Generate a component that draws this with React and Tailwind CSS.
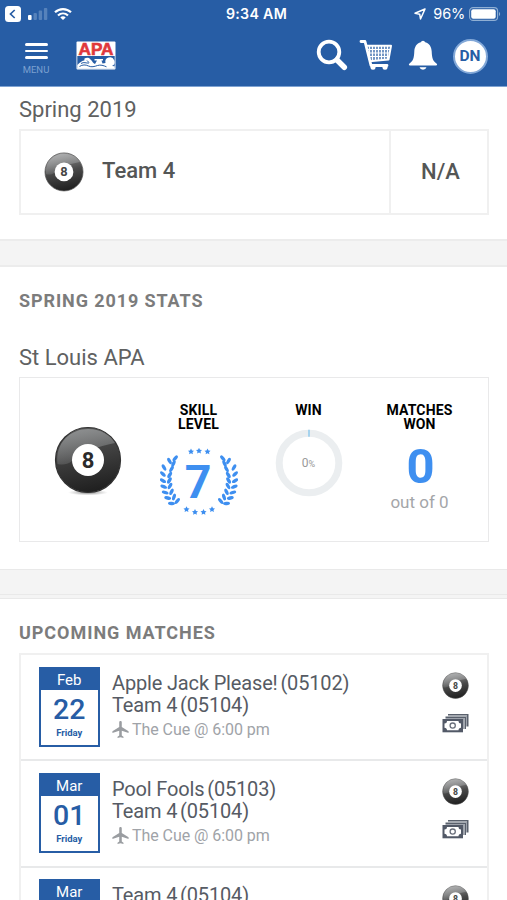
import React from "react";

function EightBall({ className, id, small = false }) {
  return (
    <svg viewBox="0 0 68 70" className={className}>
      <defs>
        <linearGradient id={`${id}-body`} x1="0.3" y1="0" x2="0.5" y2="1">
          <stop offset="0" stopColor={small ? "#9a9a9a" : "#5a5a5a"} />
          <stop offset="0.5" stopColor={small ? "#4a4a4a" : "#3c3c3c"} />
          <stop offset="1" stopColor="#1f1f1f" />
        </linearGradient>
        <linearGradient id={`${id}-gloss`} x1="0.2" y1="0" x2="0.5" y2="1">
          <stop offset="0" stopColor={small ? "#b0b1b2" : "#8f9192"} />
          <stop offset="1" stopColor="#8c8e8f" stopOpacity="0.2" />
        </linearGradient>
        <radialGradient id={`${id}-shadow`}>
          <stop offset="0" stopColor="#555" stopOpacity="0.8" />
          <stop offset="1" stopColor="#999" stopOpacity="0" />
        </radialGradient>
      </defs>
      {!small && <ellipse cx="34" cy="66.5" rx="20" ry="3" fill={`url(#${id}-shadow)`} />}
      <circle cx="34" cy="34" r="32.5" fill={`url(#${id}-body)`} stroke={small ? "#555" : "#333"} strokeWidth="1.2" />
      <path d="M3.5 38C1 16 17 3 34 3c14 0 23 7 27 14C46 20 28 25 18 35c-5 4-10 4-14.500 3Z" fill={`url(#${id}-gloss)`} />
      <circle cx="34" cy="34" r="16" fill="#fff" />
      <text x="34" y="41.500" textAnchor="middle" fontFamily="Roboto, Liberation Sans, sans-serif" fontWeight="700" fontSize="22" fill={small ? "#444" : "#2b2b2b"}>8</text>
    </svg>
  );
}

function Logo() {
  return (
    <svg viewBox="0 0 40 29" className="ml-[26px] h-[29px] w-10">
      <rect x="0.500" y="0.500" width="39" height="28" rx="1" fill="#fff" />
      <text x="20" y="13.600" textAnchor="middle" textLength="35" lengthAdjust="spacingAndGlyphs" fontFamily="Liberation Sans, sans-serif" fontWeight="700" fontSize="16.500" fill="#e0383c" stroke="#e0383c" strokeWidth="0.600">APA</text>
      <rect x="1.300" y="15" width="37.400" height="12.400" fill="#275da5" />
      <path d="M1.300 24c3-3 5-4.500 7-4.500L8.500 17.500c2-1.500 5-1 6 1 2 1.500 2.500 4 4.500 4.500l2-3.500h-2.500v-1.500h8.500v1.500h-1.500l1 3 3-.5a4.600 4.600 0 1 1 6.500 3l2.700.3v2.500H1.300Z" fill="#fff" />
      <path d="M3.500 25.500c3-2 6-2 9-.5s6 .5 9-.5 6 0 9 1.300M5 22.500c3-2 5 0 8-.5M11 19.500l2 2" fill="none" stroke="#275da5" strokeWidth="1" />
    </svg>
  );
}

function StatusBar() {
  return (
    <div className="flex h-7 items-center justify-between pl-[5px] pr-[6px] text-white">
      <div className="flex w-[126px] items-center">
        <svg viewBox="0 0 16 16" className="h-4 w-4">
          <rect width="16" height="16" rx="3.500" fill="#fff" />
          <path d="M9.700 4 5.500 8l4.200 4" fill="none" stroke="#275da5" strokeWidth="1.700" />
        </svg>
        <svg viewBox="0 0 20 14" className="ml-[7px] h-[14px] w-5 shrink-0">
          <rect x="0" y="8" width="3.600" height="5" rx="1" fill="#fff" />
          <rect x="5.500" y="6" width="3.400" height="7" rx="1" fill="#6b93c4" fillOpacity="0.7" />
          <rect x="10.700" y="3.500" width="3.400" height="9.500" rx="1" fill="#6b93c4" fillOpacity="0.7" />
          <rect x="15.900" y="1" width="3.400" height="12" rx="1" fill="#6b93c4" fillOpacity="0.7" />
        </svg>
        <svg viewBox="0 0 18 14" className="ml-[6px] h-[14px] w-[18px]" fill="none" stroke="#fff" strokeWidth="2.200">
          <path d="M1 5.300c4.500-4.300 11.500-4.300 16 0M4 8.500c2.900-2.700 7.100-2.700 10 0" />
          <path d="M9 13 6.300 10.400c1.500-1.400 3.900-1.400 5.400 0Z" fill="#fff" stroke="none" />
        </svg>
      </div>
      <div className="font-[Inter,Roboto,sans-serif] text-[14.200px] font-semibold tracking-[0.300px]">9:34 AM</div>
      <div className="flex w-[119px] items-center justify-end">
        <svg viewBox="0 0 12 12" className="h-3 w-3">
          <path d="M11 1 1 5.300l4.700.9L6.500 11Z" fill="none" stroke="#fff" strokeWidth="1.500" strokeLinejoin="round" />
        </svg>
        <span className="ml-[7px] font-[Inter,Roboto,sans-serif] text-[14.500px] tracking-[-0.200px]">96%</span>
        <svg viewBox="0 0 32 14" className="ml-1 h-[14px] w-8 shrink-0">
          <rect x="0.600" y="0.600" width="28" height="12.800" rx="3.500" fill="none" stroke="#8fafd4" strokeWidth="1.100" />
          <rect x="2.200" y="2.200" width="24.500" height="9.600" rx="2" fill="#fff" />
          <path d="M30 5c1.500.5 1.500 3.500 0 4Z" fill="#8fafd4" />
        </svg>
      </div>
    </div>
  );
}

function CartIcon() {
  return (
    <svg viewBox="0 0 34 32" className="ml-[11px] h-8 w-[34px]" fill="none" stroke="#fff">
      <path d="M2 2.500h4l6 24h16" strokeWidth="2.800" strokeLinecap="round" strokeLinejoin="round" />
      <path d="M6.500 6.700h25.500l-2.500 13.800-19 1.700" strokeWidth="2" strokeLinejoin="round" />
      <path d="M10.500 7v14M13.500 7v14M16.500 7v14M19.500 7v14M22.500 7v14M25.500 7v14M28.500 7v13" strokeWidth="1.700" />
      <path d="M8 10.500h23M9 14h21.500M10 17.500h20" strokeWidth="1.200" />
      <circle cx="14" cy="28.300" r="2.500" fill="#fff" stroke="none" />
      <circle cx="26" cy="28.300" r="2.500" fill="#fff" stroke="none" />
    </svg>
  );
}

function Header() {
  return (
    <header className="h-[86.500px] shrink-0 border-b border-[#7fa3d2] bg-[#275da5]">
      <StatusBar />
      <div className="flex h-[54px] items-center pl-[22px] pr-[19.500px]">
        <div className="flex w-7 flex-col items-center">
          <div className="mt-[8px] flex w-[23px] flex-col gap-1">
            <span className="h-[2.500px] rounded-sm bg-white" />
            <span className="h-[2.500px] rounded-sm bg-white" />
            <span className="h-[2.500px] rounded-sm bg-white" />
          </div>
          <span className="mt-[6px] text-[9.500px] leading-[10px] text-[#7ba0d0]">MENU</span>
        </div>
        <Logo />
        <div className="ml-auto flex items-center">
          <svg viewBox="0 0 32 32" className="h-8 w-8" fill="none" stroke="#fff">
            <circle cx="13" cy="13" r="10.300" strokeWidth="3.800" />
            <path d="m21 21 7.300 7.300" strokeWidth="5.500" strokeLinecap="round" />
          </svg>
          <CartIcon />
          <svg viewBox="0 0 30 32" className="ml-[15px] h-8 w-[30px]" fill="#fff">
            <path d="M12.800 3.300a2.300 2.300 0 0 1 4.400 0C21.500 4.500 23.500 8 23.700 12.500c.3 7 1.300 9.500 4.800 12 1 .8.800 2-.5 2H2c-1.300 0-1.500-1.200-.5-2 3.500-2.500 4.500-5 4.800-12C6.500 8 8.500 4.500 12.800 3.300ZM11.500 28.200h7a3.600 3.200 0 0 1-7 0Z" />
          </svg>
          <div className="ml-[15px] mt-[2px] flex h-[35px] w-[35px] items-center justify-center rounded-full border-2 border-[#82a8d8] bg-white pt-[2px] text-[15.500px] font-bold leading-none text-[#275da5]">DN</div>
        </div>
      </div>
    </header>
  );
}

const LEAVES = [
  [9.500, 13, 60], [15.200, 10.300, -48], [4, 19.500, 60], [13.500, 15.500, -65],
  [2.900, 26, 45], [11.500, 21, -60], [2.900, 32.700, 30], [9.700, 27, -58],
  [3.700, 38.700, 22], [9.400, 32.500, -58], [5.200, 44.500, 18], [10, 38, -60],
  [7.700, 50, 14], [11.500, 43.800, -65], [11.500, 55.500, 5], [14, 49, -72], [17.300, 53, -50],
];

function Branch() {
  return LEAVES.map(([x, y, r], i) => (
    <ellipse key={i} cx={x} cy={y} rx="3.500" ry="1.700" transform={`rotate(${r} ${x} ${y})`} />
  ));
}

const STARS = [[31, 3.500], [39, 2.800], [47.500, 3.500], [26.500, 61.300], [35, 64], [43.500, 64], [52, 61.300]];

function SkillBadge() {
  return (
    <svg viewBox="0 0 78 68" className="h-[68px] w-[78px]" fill="#3e8ff0">
      <Branch />
      <g transform="translate(78 0) scale(-1 1)"><Branch /></g>
      {STARS.map(([x, y], i) => (
        <path key={i} transform={`translate(${x} ${y})`} d="M0-3 1-1 3-.8 1.500.7 1.900 2.800 0 1.800-1.900 2.800-1.500.7-3-.8-1-1Z" />
      ))}
      <text x="38" y="49.500" textAnchor="middle" fontFamily="Roboto, sans-serif" fontWeight="700" fontSize="46.500">7</text>
    </svg>
  );
}

function MoneyIcon() {
  return (
    <svg viewBox="0 0 27 20" className="mt-[12.500px] h-5 w-[27px]">
      <path d="M6 1h20.500v12.500H25V2.500H6ZM3.500 3.500h20.500v12.500h-1.500V5H3.500Z" fill="#59606c" />
      <path d="M6 2.500h19v11h-1V3.500H6ZM3.500 5h19v11h-1.500V6h-17.500Z" fill="#9ea3ac" />
      <rect x="0.500" y="6" width="20.500" height="13.300" fill="#525967" />
      <path d="M5 8h11.500c0 1.700 1 2.500 2.500 2.500v4.300c-1.500 0-2.500.9-2.500 2.500H5c0-1.600-1-2.500-2.500-2.500v-4.300C4 10.500 5 9.700 5 8Z" fill="#fff" />
      <circle cx="10.700" cy="12.600" r="2.600" fill="none" stroke="#6a707c" strokeWidth="1.300" />
    </svg>
  );
}

function Match({ month, day, teams, id }) {
  return (
    <li className="flex h-[106.300px] shrink-0 border-b-2 border-[#e8e9ea] pl-[17.500px] pr-[18px] pt-[11.500px]">
      <div className="flex h-[80px] w-[61.500px] flex-col border-2 border-[#275da5] bg-white text-center text-[#275da5]">
        <div className="h-[21.500px] bg-[#275da5] text-[15px] leading-[22px] text-white">{month}</div>
        {day && (
          <>
            <div className="pt-[5px] text-[28.500px] font-medium leading-[30px]">{day}</div>
            <div className="pt-[1px] text-[9.500px] font-bold leading-[13px]">Friday</div>
          </>
        )}
      </div>
      <div className="ml-[12px] flex-1 whitespace-nowrap pt-[5px] text-[20px] leading-[22px] tracking-[-0.160px] text-[#565b64]">
        {teams.map(([name, number]) => (
          <div key={name}>
            {name} <span className="ml-[-2px]">({number})</span>
          </div>
        ))}
        <div className="flex h-[28px] items-center text-[16px] tracking-[-0.060px] text-[#a0a3a8]">
          <svg viewBox="2 2 19 20" className="mr-[3px] h-[17px] w-[17px] shrink-0" fill="#9a9da1">
            <path d="M21 16v-2l-8-5V3.500c0-.83-.67-1.500-1.500-1.500S10 2.670 10 3.500V9l-8 5v2l8-2.500V19l-2 1.500V22l3.500-1 3.500 1v-1.500L13 19v-5.500l8 2.500z" />
          </svg>
          The Cue @ 6:00 pm
        </div>
      </div>
      <div className="pt-[5.500px]">
        <EightBall id={id} small className="h-[28px] w-[27px]" />
        <MoneyIcon />
      </div>
    </li>
  );
}

function StatTitle({ children }) {
  return <h3 className="h-[29px] whitespace-nowrap text-[14px] font-bold leading-[14.500px] tracking-[0.150px] text-black">{children}</h3>;
}

export default function App() {
  return (
    <div className="flex h-[900px] w-[507px] flex-col overflow-hidden bg-white font-[Roboto,sans-serif]">
      <Header />
      <section className="h-[152px] shrink-0 pl-[19px] pr-[18px] pt-[11px]">
        <h2 className="text-[22px] leading-6 text-[#606161]">Spring 2019</h2>
        <div className="mt-[7px] flex h-[86px] border-2 border-[#f0f0f0] text-[22px] font-medium text-[#545656]">
          <div className="flex flex-1 items-center pl-[23px]">
            <EightBall id="team" small className="mt-[2px] h-[41px] w-[40px]" />
            <span className="mb-[3px] ml-[18px]">Team 4</span>
          </div>
          <div className="flex w-[98px] items-center justify-center border-l-2 border-[#f0f0f0] pl-[3px]">N/A</div>
        </div>
      </section>
      <div className="h-[28px] shrink-0 border-y-2 border-[#ececec] bg-[#f4f4f4]" />
      <section className="h-[302.500px] shrink-0 pl-[19px] pr-[18px] pt-[22px]">
        <h2 className="text-[18px] font-bold leading-6 tracking-[0.900px] text-[#7c7c7c]">SPRING 2019 STATS</h2>
        <h3 className="mt-[33px] text-[22px] leading-6 text-[#606161]">St Louis APA</h3>
        <div className="mt-[7px] flex h-[165.500px] border border-[#e9e9ea] pt-[25px] text-center">
          <div className="ml-[34px] w-[68px] pt-[23px]">
            <EightBall id="stats" className="h-[70px] w-[68px]" />
          </div>
          <div className="ml-[37px] flex w-[79px] flex-col items-center">
            <StatTitle>SKILL<br />LEVEL</StatTitle>
            <div className="mt-[16px]"><SkillBadge /></div>
          </div>
          <div className="ml-[36.500px] w-[68px]">
            <StatTitle>WIN</StatTitle>
            <div className="mt-[-3px] grid place-items-center">
              <svg viewBox="0 0 68 68" className="col-start-1 row-start-1 h-[68px] w-[68px]">
                <circle cx="34" cy="34" r="29.800" fill="none" stroke="#ebeef0" strokeWidth="7" />
                <path d="M34 .7v7" stroke="#9fd0ee" strokeWidth="1.800" />
              </svg>
              <span className="col-start-1 row-start-1 text-[12px] text-[#999]">0<span className="text-[9px]">%</span></span>
            </div>
          </div>
          <div className="ml-[33px] w-[88px]">
            <StatTitle>MATCHES<br />WON</StatTitle>
            <div className="mt-[10px] pl-[2px] text-[49px] font-bold leading-[50px] text-[#3e8ff0]">0</div>
            <div className="text-[17px] leading-[20px] text-[#a4a6a9]">out of 0</div>
          </div>
        </div>
      </section>
      <div className="h-[30px] shrink-0 border-y border-[#e9e9e9] bg-[#f4f4f4] pt-[24px]">
        <div className="h-px bg-[#e9e9e9]" />
      </div>
      <section className="flex-1 pl-[19px] pr-[18px] pt-[22px]">
        <h2 className="text-[18px] font-bold leading-6 tracking-[0.950px] text-[#7c7c7c]">UPCOMING MATCHES</h2>
        <ul className="mt-[8px] flex flex-col border-x-2 border-t-2 border-[#f0f0f0]">
          <Match id="m1" month="Feb" day="22" teams={[["Apple Jack Please!", "05102"], ["Team 4", "05104"]]} />
          <Match id="m2" month="Mar" day="01" teams={[["Pool Fools", "05103"], ["Team 4", "05104"]]} />
          <Match id="m3" month="Mar" teams={[["Team 4", "05104"]]} />
        </ul>
      </section>
    </div>
  );
}
